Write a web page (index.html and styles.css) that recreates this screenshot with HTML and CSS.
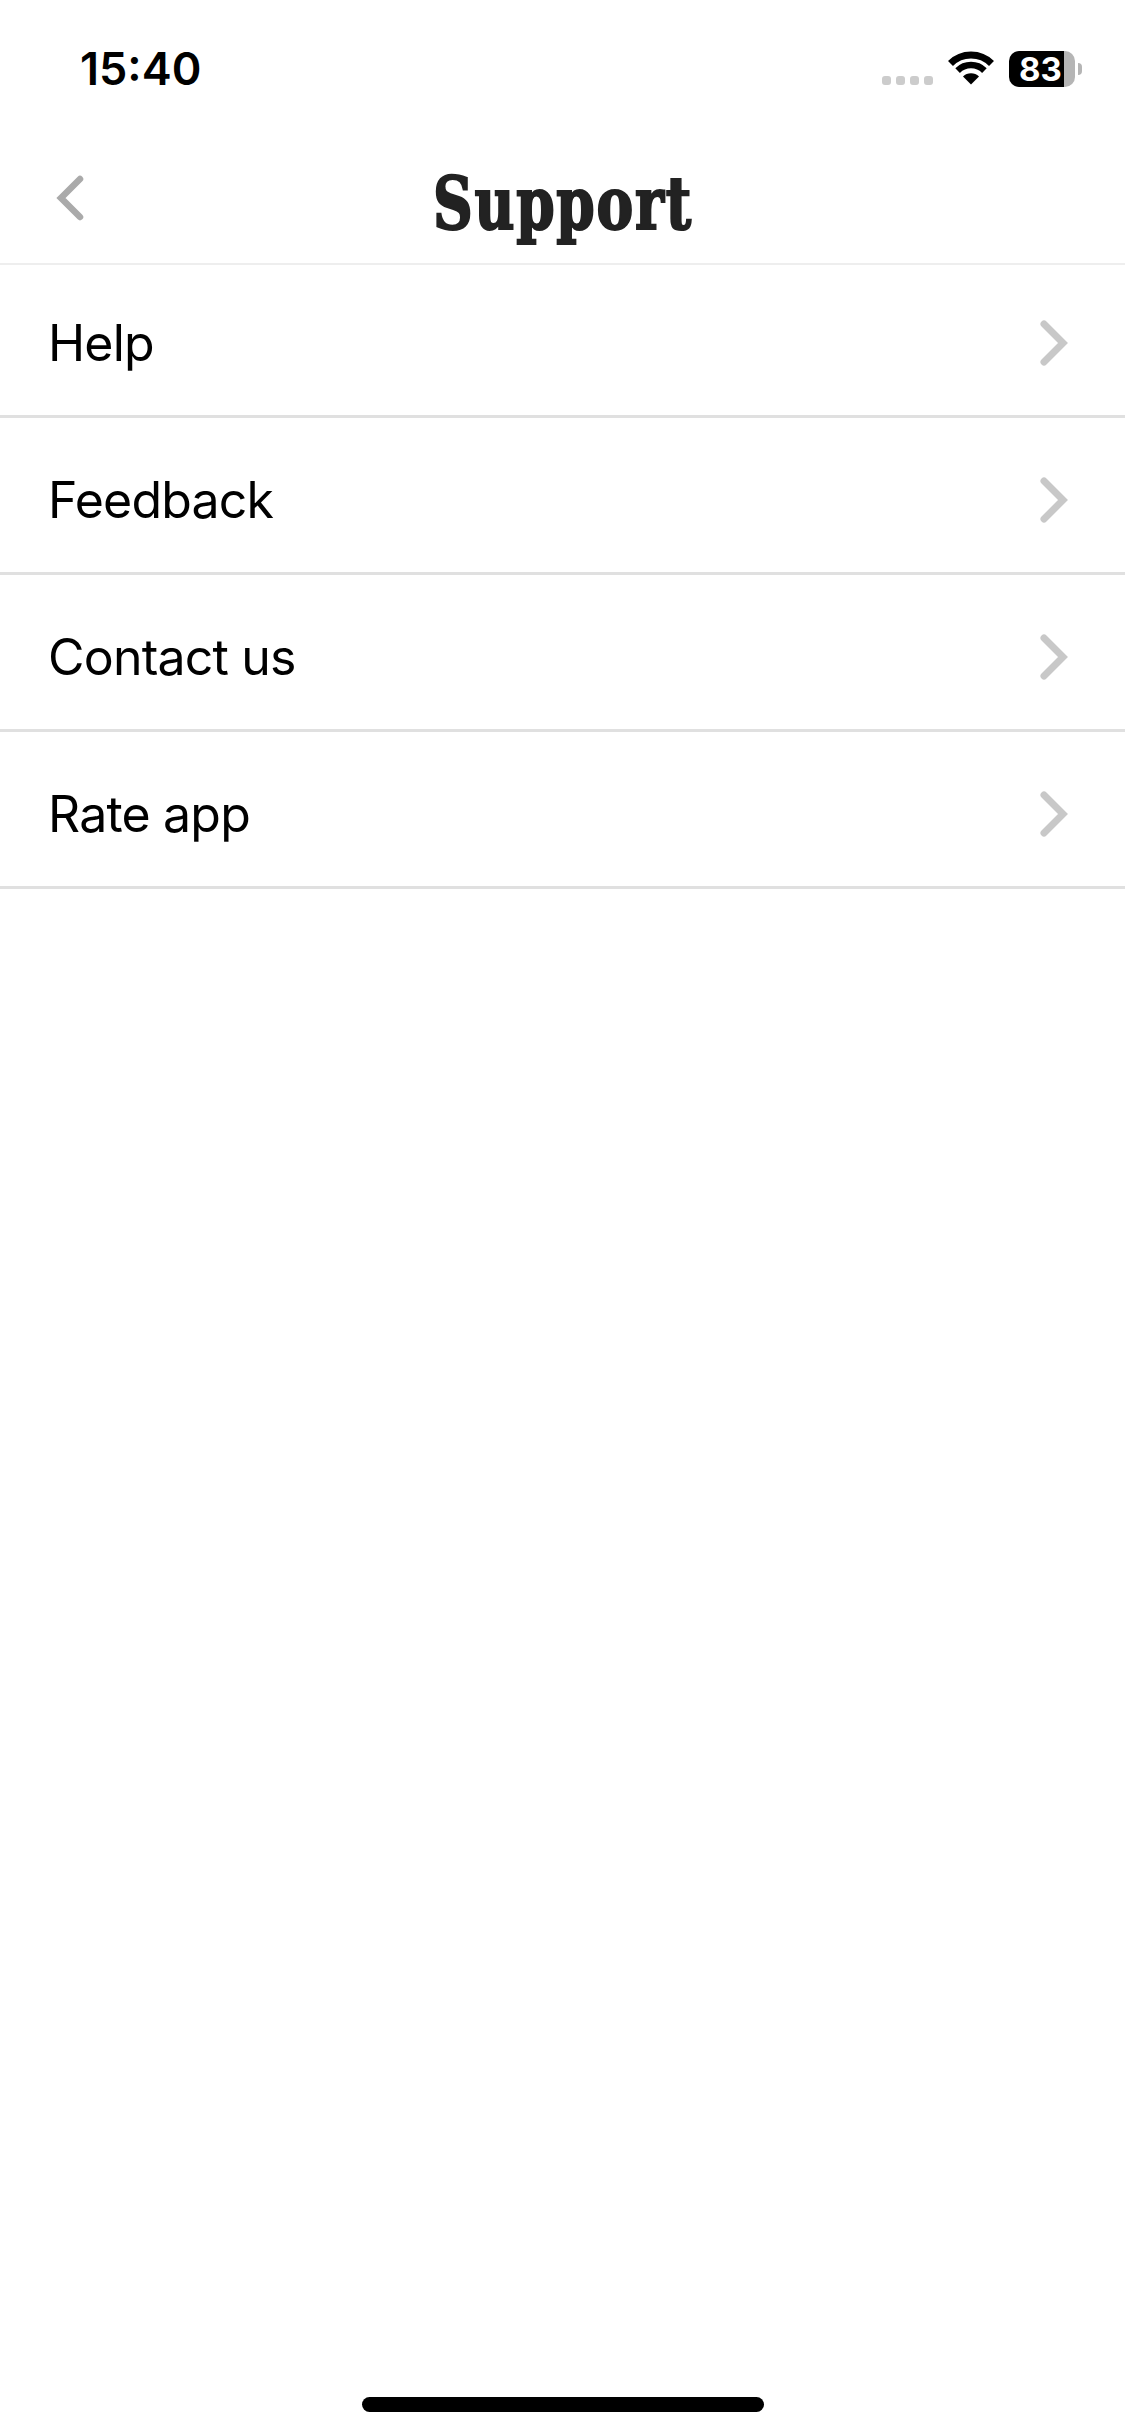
FILE: index.html
```html
<!DOCTYPE html>
<html lang="en">
<head>
    <meta charset="UTF-8">
    <meta name="viewport" content="width=device-width, initial-scale=1.0">
    <title>Support</title>
    <link rel="stylesheet" href="styles.css">
</head>
<body>
    <div class="page">
        <div class="status-bar">
            <span class="time">15:40</span>
            <div class="status-icons">
                <div class="signal"><i></i><i></i><i></i><i></i></div>
                <svg class="wifi" viewBox="0 0 46 34" width="46" height="34">
                    <path d="M2.5 12.5a29 29 0 0 1 41 0" fill="none" stroke="#000" stroke-width="7"/>
                    <path d="M9.6 19.6a19 19 0 0 1 26.8 0" fill="none" stroke="#000" stroke-width="6.5"/>
                    <path d="M23 33.5l-8-8a11.300 11.300 0 0 1 16 0z" fill="#000"/>
                </svg>
                <div class="battery">
                    <div class="battery-level">83</div>
                    <div class="battery-rest"></div>
                    <div class="battery-tip"></div>
                </div>
            </div>
        </div>

        <div class="nav">
            <svg class="back" viewBox="0 0 30 48" width="30" height="48">
                <path d="M25 5L6 24l19 19" fill="none" stroke="#aaa" stroke-width="6.500" stroke-linecap="round" stroke-linejoin="miter"/>
            </svg>
            <h1>Support</h1>
        </div>

        <ul class="menu">
            <li>
                <span>Help</span>
                <svg class="chevron" viewBox="0 0 30 48" width="30" height="48"><path d="M6 5l19 19L6 43" fill="none" stroke="#c8c8c8" stroke-width="7" stroke-linecap="round"/></svg>
            </li>
            <li>
                <span>Feedback</span>
                <svg class="chevron" viewBox="0 0 30 48" width="30" height="48"><path d="M6 5l19 19L6 43" fill="none" stroke="#c8c8c8" stroke-width="7" stroke-linecap="round"/></svg>
            </li>
            <li>
                <span>Contact us</span>
                <svg class="chevron" viewBox="0 0 30 48" width="30" height="48"><path d="M6 5l19 19L6 43" fill="none" stroke="#c8c8c8" stroke-width="7" stroke-linecap="round"/></svg>
            </li>
            <li>
                <span>Rate app</span>
                <svg class="chevron" viewBox="0 0 30 48" width="30" height="48"><path d="M6 5l19 19L6 43" fill="none" stroke="#c8c8c8" stroke-width="7" stroke-linecap="round"/></svg>
            </li>
        </ul>

        <div class="home-bar"></div>
    </div>
</body>
</html>
```

FILE: styles.css
```css
* {
    margin: 0;
    padding: 0;
    box-sizing: border-box;
}

body {
    background-color: #fff;
    color: #000;
    font-family: Inter, "Liberation Sans", sans-serif;
}

.page {
    display: flex;
    flex-direction: column;
    min-height: 2436px;
}

.status-bar {
    display: flex;
    justify-content: space-between;
    align-items: flex-start;
    height: 100px;
    padding: 42px 43px 0 80px;
}

.time {
    font-size: 45px;
    font-weight: 600;
    line-height: 54px;
}

.status-icons {
    display: flex;
    align-items: flex-end;
    margin-top: 9px;
}

.signal {
    display: flex;
    gap: 5px;
    margin-right: 15px;
    margin-bottom: 2px;
}

.signal i {
    width: 9px;
    height: 9px;
    border-radius: 3px;
    background-color: #ccc;
}

.wifi {
    display: block;
    margin-right: 15px;
    margin-bottom: 2px;
}

.battery {
    display: flex;
    align-items: center;
}

.battery-level {
    width: 55px;
    height: 36px;
    padding-left: 10px;
    border-radius: 10px 0 0 10px;
    background-color: #000;
    color: #fff;
    font-size: 33px;
    font-weight: 700;
    line-height: 36px;
}

.battery-rest {
    width: 11px;
    height: 36px;
    border-radius: 0 10px 10px 0;
    background-color: #b5b5b5;
}

.battery-tip {
    width: 4px;
    height: 12px;
    margin-left: 3px;
    border-radius: 0 6px 6px 0;
    background-color: #b5b5b5;
}

.nav {
    display: flex;
    align-items: center;
    justify-content: center;
    position: relative;
    height: 165px;
    padding-top: 45px;
    border-bottom: 2px solid #eee;
}

.back {
    position: absolute;
    left: 55px;
    top: 74px;
}

.nav h1 {
    font-family: "DejaVu Serif", serif;
    font-size: 72px;
    font-stretch: condensed;
    font-weight: 700;
    line-height: 80px;
    letter-spacing: 2px;
    color: #222;
    -webkit-text-stroke: 2px #222;
    transform: scaleX(0.85);
}

.menu {
    list-style: none;
}

.menu li {
    display: flex;
    align-items: center;
    justify-content: space-between;
    height: 157px;
    padding: 10px 57px 0 48px;
    border-bottom: 3px solid #e0e0e0;
    font-size: 50px;
    letter-spacing: -0.8px;
}

.menu li:first-child {
    height: 153px;
    padding-top: 5px;
}

.home-bar {
    width: 402px;
    height: 15px;
    margin: auto auto 24px;
    border-radius: 8px;
    background-color: #000;
}
```
